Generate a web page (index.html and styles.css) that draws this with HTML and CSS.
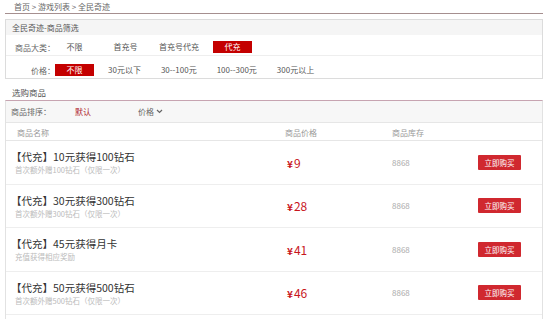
FILE: index.html
```html
<!DOCTYPE html>
<html lang="zh-CN">
<head>
  <meta charset="UTF-8" />
  <meta name="viewport" content="width=device-width, initial-scale=1.0"/>
  <title>全民奇迹 - 商品列表</title>
  <link rel="stylesheet" href="styles.css">
</head>
<body>
  <div class="page">
    <div class="crumb">首页 &gt; 游戏列表 &gt; 全民奇迹</div>

    <div class="filter">
      <div class="filter-title">全民奇迹-商品筛选</div>
      <div class="filter-row">
        <span class="filter-label">商品大类：</span>
        <span class="filter-opt">不限</span>
        <span class="filter-opt">首充号</span>
        <span class="filter-opt">首充号代充</span>
        <span class="filter-opt on">代充</span>
      </div>
      <div class="filter-row row-price">
        <span class="filter-label">价格：</span>
        <span class="filter-opt on">不限</span>
        <span class="filter-opt">30元以下</span>
        <span class="filter-opt">30--100元</span>
        <span class="filter-opt">100--300元</span>
        <span class="filter-opt">300元以上</span>
      </div>
    </div>

    <div class="section-title">选购商品</div>

    <div class="goods">
      <div class="sort">
        <span class="sort-label">商品排序：</span>
        <span class="sort-opt on">默认</span>
        <span class="sort-opt">价格
          <svg class="chev" width="7" height="5" viewBox="0 0 7 5"><path d="M1 1l2.5 2.5L6 1" fill="none" stroke="#666" stroke-width="1.2"/></svg>
        </span>
      </div>

      <div class="head">
        <span>商品名称</span>
        <span>商品价格</span>
        <span>商品库存</span>
        <span></span>
      </div>

      <div class="item">
        <div>
          <div class="item-title">【代充】10元获得100钻石</div>
          <div class="item-sub">首次额外赠100钻石（仅限一次）</div>
        </div>
        <div class="price"><span class="yen">¥</span>9</div>
        <div class="stock">8868</div>
        <div><button class="buy">立即购买</button></div>
      </div>

      <div class="item">
        <div>
          <div class="item-title">【代充】30元获得300钻石</div>
          <div class="item-sub">首次额外赠300钻石（仅限一次）</div>
        </div>
        <div class="price"><span class="yen">¥</span>28</div>
        <div class="stock">8868</div>
        <div><button class="buy">立即购买</button></div>
      </div>

      <div class="item">
        <div>
          <div class="item-title">【代充】45元获得月卡</div>
          <div class="item-sub">充值获得相应奖励</div>
        </div>
        <div class="price"><span class="yen">¥</span>41</div>
        <div class="stock">8868</div>
        <div><button class="buy">立即购买</button></div>
      </div>

      <div class="item">
        <div>
          <div class="item-title">【代充】50元获得500钻石</div>
          <div class="item-sub">首次额外赠500钻石（仅限一次）</div>
        </div>
        <div class="price"><span class="yen">¥</span>46</div>
        <div class="stock">8868</div>
        <div><button class="buy">立即购买</button></div>
      </div>
    </div>
  </div>
</body>
</html>
```

FILE: styles.css
```css
body {
  margin: 0;
  font-family: "Noto Sans CJK SC", "Noto Sans", sans-serif;
  font-size: 8px;
  color: #555;
  background: #fff;
}
.page {
  margin: 0 7px 0 5px;
}
.crumb {
  height: 13px;
  line-height: 13px;
  padding-left: 9px;
  color: #666;
  border-bottom: 1px solid #a58f8f;
}
.filter {
  margin-top: 5px;
  border: 1px solid #dcdcdc;
}
.filter-title {
  line-height: 15px;
  padding-left: 6px;
  background: #f5f5f5;
  color: #555;
}
.filter-row {
  display: flex;
  align-items: center;
  padding: 6px 0 2px;
}
.filter-row.row-price {
  padding-top: 8px;
  border-top: 1px solid #eee;
}
.filter-label {
  width: 40px;
  margin-left: 9px;
  text-align: right;
  color: #666;
}
.filter-opt {
  box-sizing: border-box;
  min-width: 39px;
  height: 12px;
  line-height: 12px;
  padding: 0 2px;
  margin-right: 12px;
  text-align: center;
  color: #555;
}
.row-price .filter-opt {
  padding: 0 6px;
  margin-right: 8px;
}
.filter-opt.on {
  background: #c40000;
  color: #fff;
}
.section-title {
  padding: 7px 0 1px 7px;
  line-height: 13px;
  font-size: 8.5px;
  color: #555;
}
.goods {
  border: 1px solid #e2e2e2;
  border-top-color: #c7a4b1;
  min-height: 230px;
}
.sort {
  display: flex;
  align-items: center;
  height: 21px;
  padding-left: 5px;
  background: #f7f7f7;
  border-bottom: 1px solid #e6e6e6;
  color: #666;
}
.sort-label {
  width: 64px;
}
.sort-opt {
  width: 63px;
  display: flex;
  align-items: center;
  gap: 2px;
}
.sort-opt.on {
  color: #b0262e;
}
.head, .item {
  display: grid;
  grid-template-columns: 270px 107px 1fr auto;
  padding: 0 21px 0 9px;
}
.head {
  padding-top: 3px;
  line-height: 14px;
  color: #999;
  border-bottom: 1px solid #e6e6e6;
}
.head span:first-child {
  padding-left: 2px;
}
.item {
  height: 42.5px;
  align-items: center;
  border-bottom: 1px solid #eee;
}
.item-title {
  margin-left: -4px;
  font-size: 10.5px;
  line-height: 15px;
  color: #333;
}
.item-sub {
  font-size: 7.5px;
  line-height: 11px;
  color: #bbb;
}
.price {
  font-size: 12px;
  color: #c8161d;
  padding-left: 2px;
}
.yen {
  font-size: 10px;
  font-weight: bold;
  margin-right: 1px;
}
.stock {
  color: #aaa;
}
.buy {
  display: block;
  width: 43px;
  height: 15px;
  padding: 0;
  border: none;
  border-radius: 1px;
  background: #d0282f;
  color: #fff;
  font-family: inherit;
  font-size: 7.5px;
  cursor: pointer;
}
```
